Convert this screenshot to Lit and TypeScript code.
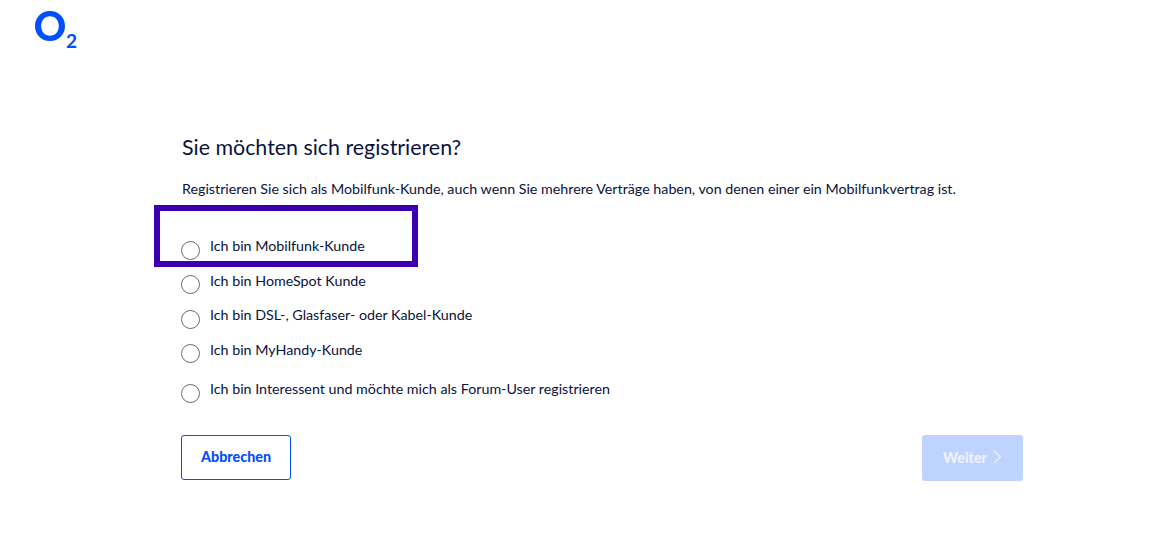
import { LitElement, html, css } from 'lit';
import { customElement } from 'lit/decorators.js';

const OPTIONS = [
  { label: 'Ich bin Mobilfunk-Kunde', gap: 0 },
  { label: 'Ich bin HomeSpot Kunde', gap: 0 },
  { label: 'Ich bin DSL-, Glasfaser- oder Kabel-Kunde', gap: 0 },
  { label: 'Ich bin MyHandy-Kunde', gap: 0 },
  { label: 'Ich bin Interessent und möchte mich als Forum-User registrieren', gap: 5 },
];

@customElement('app-root')
export class AppRoot extends LitElement {
  static styles = css`
    :host {
      display: block;
      height: 555px;
      background: #fff;
      font-family: 'Lato', sans-serif;
      color: #0a1340;
      overflow: hidden;
    }

    .header {
      height: 48px;
      padding: 8px 0 0 34px;
      box-sizing: border-box;
    }

    .logo {
      display: flex;
      align-items: flex-start;
      color: #0050ff;
    }

    .logo-two {
      font-size: 19px;
      font-weight: 700;
      line-height: 18px;
      margin: 24px 0 0 0;
    }

    .main {
      position: relative;
      width: 842px;
      margin-left: 181px;
      padding-top: 86px;
    }

    h1 {
      margin: 0;
      padding-left: 1px;
      font-size: 21.4px;
      font-weight: 400;
      line-height: 27px;
    }

    .intro {
      margin: 18px 0 0;
      padding-left: 1px;
      font-size: 14.28px;
      line-height: 20px;
    }

    .options {
      display: flex;
      flex-direction: column;
      margin-top: 37px;
    }

    .option {
      display: flex;
      align-items: flex-start;
      gap: 10px;
      height: 34.6px;
      font-size: 14.28px;
      line-height: 20px;
    }

    .radio {
      width: 17px;
      height: 17px;
      margin-top: 4.5px;
      border: 1px solid #6b6b6b;
      border-radius: 50%;
      flex: none;
    }

    .actions {
      display: flex;
      justify-content: space-between;
      margin-top: 21px;
    }

    .btn {
      display: flex;
      align-items: center;
      justify-content: center;
      gap: 6px;
      height: 46px;
      box-sizing: border-box;
      padding-bottom: 1px;
      border-radius: 3px;
      font-size: 14.3px;
      font-weight: 900;
    }

    .cancel {
      width: 110px;
      height: 45px;
      border: 1px solid #0050ff;
      color: #0050ff;
    }

    .next {
      width: 101px;
      background: #bfd3ff;
      color: #eef3ff;
    }

    .highlight {
      position: absolute;
      left: -27px;
      top: 157px;
      width: 264px;
      height: 62px;
      box-sizing: border-box;
      border: 6px solid #3d00b0;
    }
  `;

  render() {
    return html`
      <div class="header">
        <div class="logo">
          <svg width="32" height="34" viewBox="0 0 32 34">
            <path
              fill="#0050ff"
              fill-rule="evenodd"
              d="M16 3c8.600 0 15 6.300 15 15s-6.400 15-15 15S1 26.700 1 18 7.400 3 16 3zm0 5.200c-5.300 0-8.800 4.200-8.800 9.800s3.500 9.800 8.800 9.800 8.800-4.200 8.800-9.800-3.500-9.800-8.800-9.800z"
            ></path>
          </svg>
          <span class="logo-two">2</span>
        </div>
      </div>
      <div class="main">
        <h1>Sie möchten sich registrieren?</h1>
        <p class="intro">Registrieren Sie sich als Mobilfunk-Kunde, auch wenn Sie mehrere Verträge haben, von denen einer ein Mobilfunkvertrag ist.</p>
        <div class="options">
          ${OPTIONS.map(
            (o) => html`
              <div class="option" style="margin-top:${o.gap}px">
                <span class="radio"></span>
                <span>${o.label}</span>
              </div>
            `
          )}
        </div>
        <div class="actions">
          <div class="btn cancel">Abbrechen</div>
          <div class="btn next">
            Weiter
            <svg width="9" height="14" viewBox="0 0 9 14">
              <path d="M1 1l6.500 6L1 13" fill="none" stroke="#eef3ff" stroke-width="1.2"></path>
            </svg>
          </div>
        </div>
        <div class="highlight"></div>
      </div>
    `;
  }
}
